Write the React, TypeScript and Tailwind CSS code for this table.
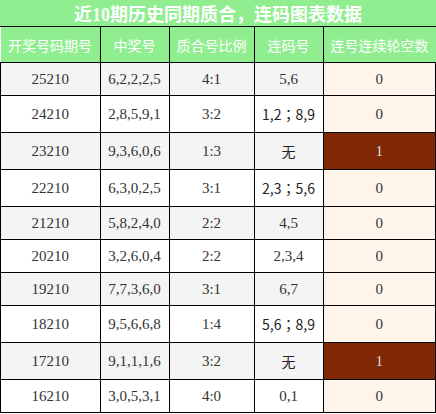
import React from "react";

type Row = { id: string; nums: string; ratio: string; lian: string; miss: number };

const rows: Row[] = [
  { id: "25210", nums: "6,2,2,2,5", ratio: "4:1", lian: "5,6", miss: 0 },
  { id: "24210", nums: "2,8,5,9,1", ratio: "3:2", lian: "1,2；8,9", miss: 0 },
  { id: "23210", nums: "9,3,6,0,6", ratio: "1:3", lian: "无", miss: 1 },
  { id: "22210", nums: "6,3,0,2,5", ratio: "3:1", lian: "2,3；5,6", miss: 0 },
  { id: "21210", nums: "5,8,2,4,0", ratio: "2:2", lian: "4,5", miss: 0 },
  { id: "20210", nums: "3,2,6,0,4", ratio: "2:2", lian: "2,3,4", miss: 0 },
  { id: "19210", nums: "7,7,3,6,0", ratio: "3:1", lian: "6,7", miss: 0 },
  { id: "18210", nums: "9,5,6,6,8", ratio: "1:4", lian: "5,6；8,9", miss: 0 },
  { id: "17210", nums: "9,1,1,1,6", ratio: "3:2", lian: "无", miss: 1 },
  { id: "16210", nums: "3,0,5,3,1", ratio: "4:0", lian: "0,1", miss: 0 },
];

const headers = ["开奖号码期号", "中奖号", "质合号比例", "连码号", "连号连续轮空数"];

export default function App() {
  return (
    <div className="w-[436px] bg-white">
      <div className="bg-[#90ee90] text-white text-[18px] font-bold text-center leading-[normal] border-b border-black font-['Liberation_Serif','Noto_Sans_CJK_SC',serif]">
        近10期历史同期质合，连码图表数据
      </div>
      <table className="w-full table-fixed border-collapse leading-[normal] text-center">
        <colgroup>
          <col className="w-[99.5px]" />
          <col className="w-[69px]" />
          <col className="w-[85px]" />
          <col className="w-[69px]" />
          <col />
        </colgroup>
        <thead>
          <tr className="bg-[#90ee90] text-white text-[14px] font-['Noto_Sans_CJK_SC',sans-serif] font-normal">
            {headers.map((h, i) => (
              <th
                key={h}
                className={
                  "py-[7.5px] px-0 font-normal whitespace-nowrap border-b border-black " +
                  (i < headers.length - 1 ? "border-r" : "")
                }
              >
                {h}
              </th>
            ))}
          </tr>
        </thead>
        <tbody className="text-[15px] text-[#333] font-['Liberation_Serif',serif]">
          {rows.map((r, idx) => {
            const bg = idx % 2 === 0 ? "bg-[#f4f4f4]" : "bg-white";
            const cjk = /[；无]/.test(r.lian);
            return (
              <tr key={r.id} className={bg}>
                <td className="py-[7.5px] border border-black">{r.id}</td>
                <td className="py-[7.5px] border border-black">{r.nums}</td>
                <td className="py-[7.5px] border border-black">{r.ratio}</td>
                <td
                  className={
                    "py-[7.5px] border border-black whitespace-nowrap " +
                    (cjk ? "font-['Noto_Sans_CJK_TC',sans-serif] text-[14px] leading-[21px] text-[#222]" : "")
                  }
                >
                  {r.lian}
                </td>
                <td
                  className={
                    "py-[7.5px] border border-black " +
                    (r.miss > 0 ? "bg-[#802806] text-[#ddd]" : "bg-[#fef4ea]")
                  }
                >
                  {r.miss}
                </td>
              </tr>
            );
          })}
        </tbody>
      </table>
    </div>
  );
}
